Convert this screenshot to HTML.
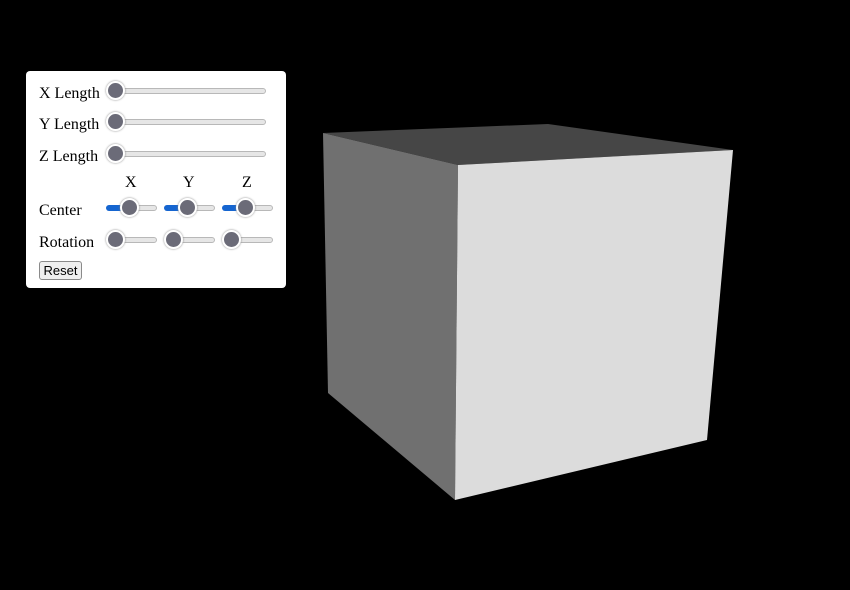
<!DOCTYPE html>
<html><head><style>
body{margin:0;width:850px;height:590px;background:#000;position:relative;overflow:hidden;font-family:"Liberation Serif",serif}
.p{position:absolute;left:26px;top:71px;width:260px;height:217px;background:#fff;border-radius:4px}
.l{position:absolute;font-size:16px;color:#000;line-height:18px}
.t{position:absolute;height:4px;background:#e6e6e6;border:1px solid #b8b8b8;border-radius:3px}
.f{position:absolute;height:6px;background:#1565d0;border-radius:3px}
.k{position:absolute;width:15px;height:15px;border-radius:50%;background:#6b6b78;border:2px solid #fff;box-shadow:0 0 2px #888}
.b{position:absolute;left:39px;top:261px;width:41px;height:17px;border:1px solid #8a8a8a;border-radius:3px;background:#efefef;font:13px "Liberation Sans",sans-serif;text-align:center;line-height:17px}
</style></head><body>
<svg width="850" height="590" style="position:absolute;left:0;top:0">
<polygon points="323,133 548,124 733,150 458,165" fill="#464646"/>
<polygon points="323,133 458,165 455,500 328,393" fill="#707070"/>
<polygon points="458,165 733,150 707,440 455,500" fill="#dcdcdc"/>
</svg>
<div class="p"></div>
<div class="l" style="left:39px;top:85px">X Length</div>
<div class="l" style="left:39px;top:116px">Y Length</div>
<div class="l" style="left:39px;top:148px">Z Length</div>
<div class="l" style="left:125px;top:174px">X</div>
<div class="l" style="left:183px;top:174px">Y</div>
<div class="l" style="left:242px;top:174px">Z</div>
<div class="l" style="left:39px;top:202px">Center</div>
<div class="l" style="left:39px;top:234px">Rotation</div>
<div class="t" style="left:108px;top:88px;width:156px"></div>
<div class="t" style="left:108px;top:119px;width:156px"></div>
<div class="t" style="left:108px;top:151px;width:156px"></div>
<div class="t" style="left:107px;top:205px;width:48px"></div>
<div class="t" style="left:165px;top:205px;width:48px"></div>
<div class="t" style="left:223px;top:205px;width:48px"></div>
<div class="f" style="left:106px;top:205px;width:26px"></div>
<div class="f" style="left:164px;top:205px;width:26px"></div>
<div class="f" style="left:222px;top:205px;width:26px"></div>
<div class="t" style="left:107px;top:237px;width:48px"></div>
<div class="t" style="left:165px;top:237px;width:48px"></div>
<div class="t" style="left:223px;top:237px;width:48px"></div>
<div class="k" style="left:106px;top:81px"></div>
<div class="k" style="left:106px;top:112px"></div>
<div class="k" style="left:106px;top:144px"></div>
<div class="k" style="left:120px;top:198px"></div>
<div class="k" style="left:178px;top:198px"></div>
<div class="k" style="left:236px;top:198px"></div>
<div class="k" style="left:106px;top:230px"></div>
<div class="k" style="left:164px;top:230px"></div>
<div class="k" style="left:222px;top:230px"></div>
<div class="b">Reset</div>
</body></html>
